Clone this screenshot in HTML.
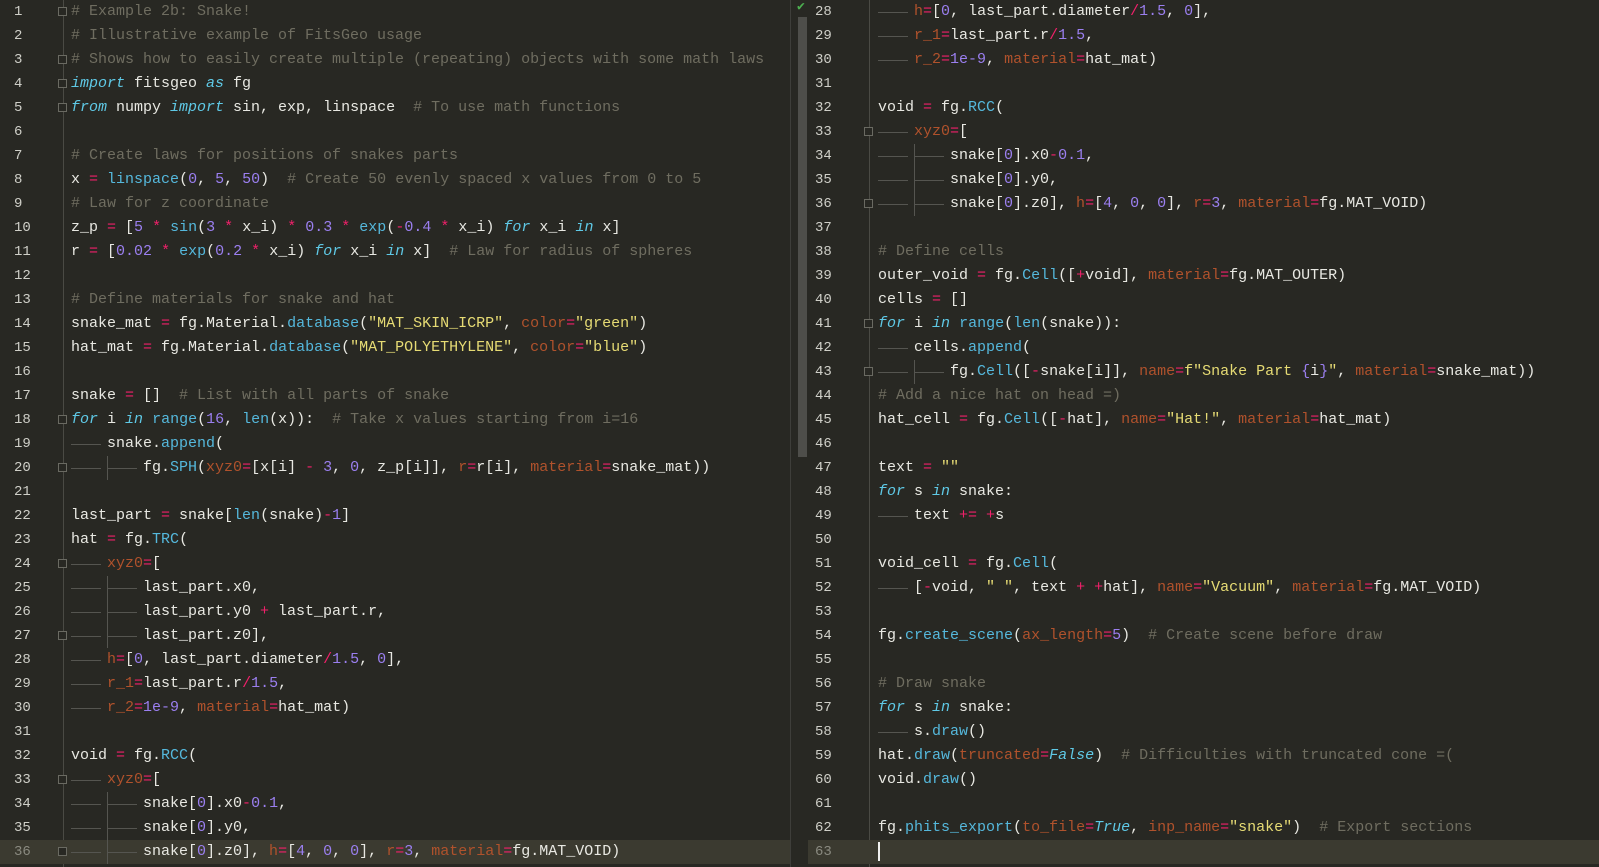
<!DOCTYPE html>
<html><head><meta charset="utf-8"><style>
html,body{margin:0;padding:0;background:#282823;width:1599px;height:867px;overflow:hidden}
body{position:relative;font-family:"Liberation Mono",monospace;font-size:15px;color:#e8e8e2}
.pane{position:absolute;top:0;height:867px;overflow:hidden}
.ln{position:absolute;height:24px;line-height:24px;white-space:pre;left:0;right:0}
.num{position:absolute;color:#cfcfc8;font-size:14px}
.code{position:absolute;white-space:pre}
.hl{background:#3b3a30}
.hl .num{color:#8a8a80}
.c{color:#6f6d60}.k{color:#5fc9e6;font-style:italic}.f{color:#55b8dc}.o{color:#f0206a}.n{color:#9b7ff0}.p{color:#b0522c}.s{color:#e6db74}
i.t{display:inline-block;width:36px;height:24px;vertical-align:top;position:relative;font-style:normal}
i.t:after{content:"";position:absolute;left:0;width:30px;top:12px;height:1px;background:#555550}
i.g:before{content:"";position:absolute;left:0;top:0;height:24px;width:1px;background:#555550}
.gut{position:absolute;top:0;width:1px;height:867px;background:#4a4a44}
.fm{position:absolute;width:9px;height:9px;border:1px solid #6a6a62;background:#282823;box-sizing:border-box}
.caret{display:inline-block;width:2px;height:19px;background:#f0f0f0;vertical-align:middle}
</style></head><body>
<div class="pane" style="left:0;width:790px">
<div class="gut" style="left:63px"></div>
<div class="ln" style="top:0"><span class="num" style="left:14px">1</span><span class="code" style="left:71px"><span class="c"># Example 2b: Snake!</span></span></div>
<div class="ln" style="top:24px"><span class="num" style="left:14px">2</span><span class="code" style="left:71px"><span class="c"># Illustrative example of FitsGeo usage</span></span></div>
<div class="ln" style="top:48px"><span class="num" style="left:14px">3</span><span class="code" style="left:71px"><span class="c"># Shows how to easily create multiple (repeating) objects with some math laws</span></span></div>
<div class="ln" style="top:72px"><span class="num" style="left:14px">4</span><span class="code" style="left:71px"><span class="k">import</span> fitsgeo <span class="k">as</span> fg</span></div>
<div class="ln" style="top:96px"><span class="num" style="left:14px">5</span><span class="code" style="left:71px"><span class="k">from</span> numpy <span class="k">import</span> sin, exp, linspace  <span class="c"># To use math functions</span></span></div>
<div class="ln" style="top:120px"><span class="num" style="left:14px">6</span></div>
<div class="ln" style="top:144px"><span class="num" style="left:14px">7</span><span class="code" style="left:71px"><span class="c"># Create laws for positions of snakes parts</span></span></div>
<div class="ln" style="top:168px"><span class="num" style="left:14px">8</span><span class="code" style="left:71px">x <span class="o">=</span> <span class="f">linspace</span>(<span class="n">0</span>, <span class="n">5</span>, <span class="n">50</span>)  <span class="c"># Create 50 evenly spaced x values from 0 to 5</span></span></div>
<div class="ln" style="top:192px"><span class="num" style="left:14px">9</span><span class="code" style="left:71px"><span class="c"># Law for z coordinate</span></span></div>
<div class="ln" style="top:216px"><span class="num" style="left:14px">10</span><span class="code" style="left:71px">z_p <span class="o">=</span> [<span class="n">5</span> <span class="o">*</span> <span class="f">sin</span>(<span class="n">3</span> <span class="o">*</span> x_i) <span class="o">*</span> <span class="n">0.3</span> <span class="o">*</span> <span class="f">exp</span>(<span class="o">-</span><span class="n">0.4</span> <span class="o">*</span> x_i) <span class="k">for</span> x_i <span class="k">in</span> x]</span></div>
<div class="ln" style="top:240px"><span class="num" style="left:14px">11</span><span class="code" style="left:71px">r <span class="o">=</span> [<span class="n">0.02</span> <span class="o">*</span> <span class="f">exp</span>(<span class="n">0.2</span> <span class="o">*</span> x_i) <span class="k">for</span> x_i <span class="k">in</span> x]  <span class="c"># Law for radius of spheres</span></span></div>
<div class="ln" style="top:264px"><span class="num" style="left:14px">12</span></div>
<div class="ln" style="top:288px"><span class="num" style="left:14px">13</span><span class="code" style="left:71px"><span class="c"># Define materials for snake and hat</span></span></div>
<div class="ln" style="top:312px"><span class="num" style="left:14px">14</span><span class="code" style="left:71px">snake_mat <span class="o">=</span> fg.Material.<span class="f">database</span>(<span class="s">"MAT_SKIN_ICRP"</span>, <span class="p">color</span><span class="o">=</span><span class="s">"green"</span>)</span></div>
<div class="ln" style="top:336px"><span class="num" style="left:14px">15</span><span class="code" style="left:71px">hat_mat <span class="o">=</span> fg.Material.<span class="f">database</span>(<span class="s">"MAT_POLYETHYLENE"</span>, <span class="p">color</span><span class="o">=</span><span class="s">"blue"</span>)</span></div>
<div class="ln" style="top:360px"><span class="num" style="left:14px">16</span></div>
<div class="ln" style="top:384px"><span class="num" style="left:14px">17</span><span class="code" style="left:71px">snake <span class="o">=</span> []  <span class="c"># List with all parts of snake</span></span></div>
<div class="ln" style="top:408px"><span class="num" style="left:14px">18</span><span class="code" style="left:71px"><span class="k">for</span> i <span class="k">in</span> <span class="f">range</span>(<span class="n">16</span>, <span class="f">len</span>(x)):  <span class="c"># Take x values starting from i=16</span></span></div>
<div class="ln" style="top:432px"><span class="num" style="left:14px">19</span><span class="code" style="left:71px"><i class="t"></i>snake.<span class="f">append</span>(</span></div>
<div class="ln" style="top:456px"><span class="num" style="left:14px">20</span><span class="code" style="left:71px"><i class="t"></i><i class="t g"></i>fg.<span class="f">SPH</span>(<span class="p">xyz0</span><span class="o">=</span>[x[i] <span class="o">-</span> <span class="n">3</span>, <span class="n">0</span>, z_p[i]], <span class="p">r</span><span class="o">=</span>r[i], <span class="p">material</span><span class="o">=</span>snake_mat))</span></div>
<div class="ln" style="top:480px"><span class="num" style="left:14px">21</span></div>
<div class="ln" style="top:504px"><span class="num" style="left:14px">22</span><span class="code" style="left:71px">last_part <span class="o">=</span> snake[<span class="f">len</span>(snake)<span class="o">-</span><span class="n">1</span>]</span></div>
<div class="ln" style="top:528px"><span class="num" style="left:14px">23</span><span class="code" style="left:71px">hat <span class="o">=</span> fg.<span class="f">TRC</span>(</span></div>
<div class="ln" style="top:552px"><span class="num" style="left:14px">24</span><span class="code" style="left:71px"><i class="t"></i><span class="p">xyz0</span><span class="o">=</span>[</span></div>
<div class="ln" style="top:576px"><span class="num" style="left:14px">25</span><span class="code" style="left:71px"><i class="t"></i><i class="t g"></i>last_part.x0,</span></div>
<div class="ln" style="top:600px"><span class="num" style="left:14px">26</span><span class="code" style="left:71px"><i class="t"></i><i class="t g"></i>last_part.y0 <span class="o">+</span> last_part.r,</span></div>
<div class="ln" style="top:624px"><span class="num" style="left:14px">27</span><span class="code" style="left:71px"><i class="t"></i><i class="t g"></i>last_part.z0],</span></div>
<div class="ln" style="top:648px"><span class="num" style="left:14px">28</span><span class="code" style="left:71px"><i class="t"></i><span class="p">h</span><span class="o">=</span>[<span class="n">0</span>, last_part.diameter<span class="o">/</span><span class="n">1.5</span>, <span class="n">0</span>],</span></div>
<div class="ln" style="top:672px"><span class="num" style="left:14px">29</span><span class="code" style="left:71px"><i class="t"></i><span class="p">r_1</span><span class="o">=</span>last_part.r<span class="o">/</span><span class="n">1.5</span>,</span></div>
<div class="ln" style="top:696px"><span class="num" style="left:14px">30</span><span class="code" style="left:71px"><i class="t"></i><span class="p">r_2</span><span class="o">=</span><span class="n">1e-9</span>, <span class="p">material</span><span class="o">=</span>hat_mat)</span></div>
<div class="ln" style="top:720px"><span class="num" style="left:14px">31</span></div>
<div class="ln" style="top:744px"><span class="num" style="left:14px">32</span><span class="code" style="left:71px">void <span class="o">=</span> fg.<span class="f">RCC</span>(</span></div>
<div class="ln" style="top:768px"><span class="num" style="left:14px">33</span><span class="code" style="left:71px"><i class="t"></i><span class="p">xyz0</span><span class="o">=</span>[</span></div>
<div class="ln" style="top:792px"><span class="num" style="left:14px">34</span><span class="code" style="left:71px"><i class="t"></i><i class="t g"></i>snake[<span class="n">0</span>].x0<span class="o">-</span><span class="n">0.1</span>,</span></div>
<div class="ln" style="top:816px"><span class="num" style="left:14px">35</span><span class="code" style="left:71px"><i class="t"></i><i class="t g"></i>snake[<span class="n">0</span>].y0,</span></div>
<div class="ln hl" style="top:840px"><span class="num" style="left:14px">36</span><span class="code" style="left:71px"><i class="t"></i><i class="t g"></i>snake[<span class="n">0</span>].z0], <span class="p">h</span><span class="o">=</span>[<span class="n">4</span>, <span class="n">0</span>, <span class="n">0</span>], <span class="p">r</span><span class="o">=</span><span class="n">3</span>, <span class="p">material</span><span class="o">=</span>fg.MAT_VOID)</span></div>
<div class="fm" style="left:58px;top:7px"></div><div class="fm" style="left:58px;top:55px"></div><div class="fm" style="left:58px;top:79px"></div><div class="fm" style="left:58px;top:103px"></div><div class="fm" style="left:58px;top:415px"></div><div class="fm" style="left:58px;top:463px"></div><div class="fm" style="left:58px;top:559px"></div><div class="fm" style="left:58px;top:631px"></div><div class="fm" style="left:58px;top:775px"></div><div class="fm" style="left:58px;top:847px"></div>
</div>
<div style="position:absolute;left:790px;top:0;width:1px;height:867px;background:#3e3e3a"></div>
<div style="position:absolute;left:798px;top:17px;width:9px;height:440px;background:#4e4e4a"></div>
<div style="position:absolute;left:797px;top:0;color:#4caf50;font-size:13px;line-height:14px">✔</div>
<div class="pane" style="left:808px;width:791px">
<div class="gut" style="left:61px"></div>
<div class="ln" style="top:0"><span class="num" style="left:7px">28</span><span class="code" style="left:70px"><i class="t"></i><span class="p">h</span><span class="o">=</span>[<span class="n">0</span>, last_part.diameter<span class="o">/</span><span class="n">1.5</span>, <span class="n">0</span>],</span></div>
<div class="ln" style="top:24px"><span class="num" style="left:7px">29</span><span class="code" style="left:70px"><i class="t"></i><span class="p">r_1</span><span class="o">=</span>last_part.r<span class="o">/</span><span class="n">1.5</span>,</span></div>
<div class="ln" style="top:48px"><span class="num" style="left:7px">30</span><span class="code" style="left:70px"><i class="t"></i><span class="p">r_2</span><span class="o">=</span><span class="n">1e-9</span>, <span class="p">material</span><span class="o">=</span>hat_mat)</span></div>
<div class="ln" style="top:72px"><span class="num" style="left:7px">31</span></div>
<div class="ln" style="top:96px"><span class="num" style="left:7px">32</span><span class="code" style="left:70px">void <span class="o">=</span> fg.<span class="f">RCC</span>(</span></div>
<div class="ln" style="top:120px"><span class="num" style="left:7px">33</span><span class="code" style="left:70px"><i class="t"></i><span class="p">xyz0</span><span class="o">=</span>[</span></div>
<div class="ln" style="top:144px"><span class="num" style="left:7px">34</span><span class="code" style="left:70px"><i class="t"></i><i class="t g"></i>snake[<span class="n">0</span>].x0<span class="o">-</span><span class="n">0.1</span>,</span></div>
<div class="ln" style="top:168px"><span class="num" style="left:7px">35</span><span class="code" style="left:70px"><i class="t"></i><i class="t g"></i>snake[<span class="n">0</span>].y0,</span></div>
<div class="ln" style="top:192px"><span class="num" style="left:7px">36</span><span class="code" style="left:70px"><i class="t"></i><i class="t g"></i>snake[<span class="n">0</span>].z0], <span class="p">h</span><span class="o">=</span>[<span class="n">4</span>, <span class="n">0</span>, <span class="n">0</span>], <span class="p">r</span><span class="o">=</span><span class="n">3</span>, <span class="p">material</span><span class="o">=</span>fg.MAT_VOID)</span></div>
<div class="ln" style="top:216px"><span class="num" style="left:7px">37</span></div>
<div class="ln" style="top:240px"><span class="num" style="left:7px">38</span><span class="code" style="left:70px"><span class="c"># Define cells</span></span></div>
<div class="ln" style="top:264px"><span class="num" style="left:7px">39</span><span class="code" style="left:70px">outer_void <span class="o">=</span> fg.<span class="f">Cell</span>([<span class="o">+</span>void], <span class="p">material</span><span class="o">=</span>fg.MAT_OUTER)</span></div>
<div class="ln" style="top:288px"><span class="num" style="left:7px">40</span><span class="code" style="left:70px">cells <span class="o">=</span> []</span></div>
<div class="ln" style="top:312px"><span class="num" style="left:7px">41</span><span class="code" style="left:70px"><span class="k">for</span> i <span class="k">in</span> <span class="f">range</span>(<span class="f">len</span>(snake)):</span></div>
<div class="ln" style="top:336px"><span class="num" style="left:7px">42</span><span class="code" style="left:70px"><i class="t"></i>cells.<span class="f">append</span>(</span></div>
<div class="ln" style="top:360px"><span class="num" style="left:7px">43</span><span class="code" style="left:70px"><i class="t"></i><i class="t g"></i>fg.<span class="f">Cell</span>([<span class="o">-</span>snake[i]], <span class="p">name</span><span class="o">=</span><span class="s">f"Snake Part </span><span class="n">{</span>i<span class="n">}</span><span class="s">"</span>, <span class="p">material</span><span class="o">=</span>snake_mat))</span></div>
<div class="ln" style="top:384px"><span class="num" style="left:7px">44</span><span class="code" style="left:70px"><span class="c"># Add a nice hat on head =)</span></span></div>
<div class="ln" style="top:408px"><span class="num" style="left:7px">45</span><span class="code" style="left:70px">hat_cell <span class="o">=</span> fg.<span class="f">Cell</span>([<span class="o">-</span>hat], <span class="p">name</span><span class="o">=</span><span class="s">"Hat!"</span>, <span class="p">material</span><span class="o">=</span>hat_mat)</span></div>
<div class="ln" style="top:432px"><span class="num" style="left:7px">46</span></div>
<div class="ln" style="top:456px"><span class="num" style="left:7px">47</span><span class="code" style="left:70px">text <span class="o">=</span> <span class="s">""</span></span></div>
<div class="ln" style="top:480px"><span class="num" style="left:7px">48</span><span class="code" style="left:70px"><span class="k">for</span> s <span class="k">in</span> snake:</span></div>
<div class="ln" style="top:504px"><span class="num" style="left:7px">49</span><span class="code" style="left:70px"><i class="t"></i>text <span class="o">+=</span> <span class="o">+</span>s</span></div>
<div class="ln" style="top:528px"><span class="num" style="left:7px">50</span></div>
<div class="ln" style="top:552px"><span class="num" style="left:7px">51</span><span class="code" style="left:70px">void_cell <span class="o">=</span> fg.<span class="f">Cell</span>(</span></div>
<div class="ln" style="top:576px"><span class="num" style="left:7px">52</span><span class="code" style="left:70px"><i class="t"></i>[<span class="o">-</span>void, <span class="s">" "</span>, text <span class="o">+</span> <span class="o">+</span>hat], <span class="p">name</span><span class="o">=</span><span class="s">"Vacuum"</span>, <span class="p">material</span><span class="o">=</span>fg.MAT_VOID)</span></div>
<div class="ln" style="top:600px"><span class="num" style="left:7px">53</span></div>
<div class="ln" style="top:624px"><span class="num" style="left:7px">54</span><span class="code" style="left:70px">fg.<span class="f">create_scene</span>(<span class="p">ax_length</span><span class="o">=</span><span class="n">5</span>)  <span class="c"># Create scene before draw</span></span></div>
<div class="ln" style="top:648px"><span class="num" style="left:7px">55</span></div>
<div class="ln" style="top:672px"><span class="num" style="left:7px">56</span><span class="code" style="left:70px"><span class="c"># Draw snake</span></span></div>
<div class="ln" style="top:696px"><span class="num" style="left:7px">57</span><span class="code" style="left:70px"><span class="k">for</span> s <span class="k">in</span> snake:</span></div>
<div class="ln" style="top:720px"><span class="num" style="left:7px">58</span><span class="code" style="left:70px"><i class="t"></i>s.<span class="f">draw</span>()</span></div>
<div class="ln" style="top:744px"><span class="num" style="left:7px">59</span><span class="code" style="left:70px">hat.<span class="f">draw</span>(<span class="p">truncated</span><span class="o">=</span><span class="k">False</span>)  <span class="c"># Difficulties with truncated cone =(</span></span></div>
<div class="ln" style="top:768px"><span class="num" style="left:7px">60</span><span class="code" style="left:70px">void.<span class="f">draw</span>()</span></div>
<div class="ln" style="top:792px"><span class="num" style="left:7px">61</span></div>
<div class="ln" style="top:816px"><span class="num" style="left:7px">62</span><span class="code" style="left:70px">fg.<span class="f">phits_export</span>(<span class="p">to_file</span><span class="o">=</span><span class="k">True</span>, <span class="p">inp_name</span><span class="o">=</span><span class="s">"snake"</span>)  <span class="c"># Export sections</span></span></div>
<div class="ln hl" style="top:840px"><span class="num" style="left:7px">63</span><span class="code" style="left:70px"><span class="caret"></span></span></div>
<div class="fm" style="left:56px;top:127px"></div><div class="fm" style="left:56px;top:199px"></div><div class="fm" style="left:56px;top:319px"></div><div class="fm" style="left:56px;top:367px"></div>
</div>
</body></html>
